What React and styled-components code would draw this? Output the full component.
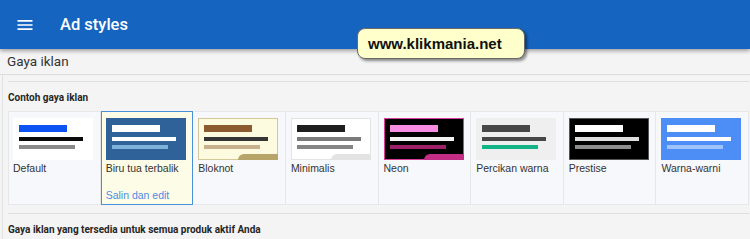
import React from 'react';
import styled, { createGlobalStyle } from 'styled-components';

const GlobalStyle = createGlobalStyle`
  html, body {
    margin: 0;
    padding: 0;
    background: #f4f4f4;
    overflow: hidden;
  }
  * {
    box-sizing: border-box;
  }
`

const Page = styled.div`
  position: relative;
  width: 750px;
  height: 239px;
  overflow: hidden;
  font-family: Roboto, "Liberation Sans", Arial, sans-serif;
`

const Header = styled.header`
  position: relative;
  z-index: 2;
  height: 49px;
  background: #1565c0;
  box-shadow: 0 2px 4px rgba(0, 0, 0, 0.35);
  display: flex;
  align-items: center;
  padding-left: 15px;
`

const MenuButton = styled.span`
  display: flex;
  width: 20px;
  height: 20px;
  margin-right: 25px;
`

const AppTitle = styled.h1`
  margin: 0;
  color: #ffffff;
  font-size: 16.5px;
  font-weight: 500;
`

const TitleBar = styled.div`
  height: 26px;
  padding: 4px 0 0 7px;
  border-bottom: 1px solid #dcdcdc;
  color: #333333;
  font-size: 13.5px;
  line-height: 17px;
`

const Content = styled.div`
  margin-left: 2px;
  border-left: 1px solid #e2e2e2;
  padding: 6px 1px 0 5px;
  height: 200px;
`

const Card = styled.section`
  border-top: 1px solid #dedede;
  border-bottom: 1px solid #dedede;
  padding: 9px 0 8px;
`

const SectionHeading = styled.h2`
  margin: 0;
  font-size: 10px;
  line-height: 13px;
  font-weight: 700;
  color: #262626;
`

const BottomHeading = styled(SectionHeading)`
  margin-top: 9px;
`

const TileRow = styled.div`
  margin-top: 7px;
  display: grid;
  grid-template-columns: repeat(8, 1fr);
  height: 94px;
`

const Tile = styled.div`
  background: ${p => (p.$selected ? '#fdfde7' : '#f7f8fc')};
  border: 1px solid ${p => (p.$selected ? '#4a8fdb' : '#e6e7ea')};
  border-left-color: ${p => (p.$selected ? '#4a8fdb' : p.$first ? '#e6e7ea' : 'transparent')};
  padding: 6px 0 0 4px;
  font-family: "Liberation Sans", Arial, sans-serif;
`

const Preview = styled.div`
  position: relative;
  width: 80px;
  height: 42px;
  padding: 7px 0 0 6px;
  background: ${p => p.$bg};
  box-shadow: ${p => (p.$border ? `inset 0 0 0 1px ${p.$border}` : 'none')};
  overflow: hidden;

  &::after {
    content: '';
    display: ${p => (p.$tab ? 'block' : 'none')};
    position: absolute;
    right: 0;
    bottom: 0;
    width: 40px;
    height: 6px;
    border-top-left-radius: 7px;
    background: ${p => p.$tab};
  }
`

const Bar = styled.div`
  width: ${p => p.$w}px;
  height: ${p => p.$h}px;
  margin-top: ${p => p.$gap}px;
  background: ${p => p.$color};
`

const TileLabel = styled.div`
  margin-top: 1px;
  font-size: 10.5px;
  line-height: 14px;
  color: #333333;
  white-space: nowrap;
`

const EditLink = styled.a`
  display: block;
  margin-top: 13px;
  font-size: 10.5px;
  line-height: 14px;
  color: #4f8ae9;
  text-decoration: none;
`

const Watermark = styled.div`
  position: absolute;
  z-index: 3;
  left: 357px;
  top: 28px;
  width: 168px;
  height: 31px;
  padding-left: 10px;
  display: flex;
  align-items: center;
  background: #ffffcc;
  border: 1px solid #6a6a6a;
  border-radius: 8px;
  box-shadow: 2px 2px 3px rgba(0, 0, 0, 0.45);
  font-family: "Liberation Sans", Arial, sans-serif;
  font-weight: 700;
  font-size: 15px;
  color: #111111;
`

const MenuIcon = () => (
  <svg width="20" height="20" viewBox="0 0 24 24" fill="#ffffff">
    <path d="M3 18h18v-2H3v2zm0-5h18v-2H3v2zm0-7v2h18V6H3z" />
  </svg>
)

const styles = [
  { name: 'Default', bg: '#ffffff', bars: ['#0d52f2', '#0a0a0a', '#8a8a8a'] },
  { name: 'Biru tua terbalik', bg: '#2f6299', bars: ['#ffffff', '#ffffff', '#7fb2d8'], selected: true },
  { name: 'Bloknot', bg: '#fcfadf', border: '#d3c898', tab: '#b7a468', bars: ['#8b5a2e', '#353535', '#c9b18d'] },
  { name: 'Minimalis', bg: '#ffffff', border: '#e4e4e4', tab: '#e3e3e3', bars: ['#1e1e1e', '#7a7a7a', '#858585'] },
  { name: 'Neon', bg: '#000000', border: '#d63c98', tab: '#c42d86', bars: ['#f68de2', '#f2f2f2', '#9c1f68'] },
  { name: 'Percikan warna', bg: '#efefef', bars: ['#474747', '#474747', '#14b489'] },
  { name: 'Prestise', bg: '#000000', border: '#555555', bars: ['#ffffff', '#dedede', '#8c8c8c'] },
  { name: 'Warna-warni', bg: '#4d8ef6', bars: ['#ffffff', '#ffffff', '#9fc3fb'] },
]

const barShapes = [
  { w: 48, h: 7, gap: 0 },
  { w: 64, h: 4, gap: 5 },
  { w: 56, h: 4, gap: 4 },
]

const App = () => (
  <Page>
    <GlobalStyle />
    <Header>
      <MenuButton><MenuIcon /></MenuButton>
      <AppTitle>Ad styles</AppTitle>
    </Header>
    <TitleBar>Gaya iklan</TitleBar>
    <Content>
      <Card>
        <SectionHeading>Contoh gaya iklan</SectionHeading>
        <TileRow>
          {styles.map((s, i) => (
            <Tile key={s.name} $selected={s.selected} $first={i === 0}>
              <Preview $bg={s.bg} $border={s.border} $tab={s.tab}>
                {barShapes.map((b, j) => (
                  <Bar key={j} $w={b.w} $h={b.h} $gap={b.gap} $color={s.bars[j]} />
                ))}
              </Preview>
              <TileLabel>{s.name}</TileLabel>
              {s.selected && <EditLink href="#">Salin dan edit</EditLink>}
            </Tile>
          ))}
        </TileRow>
      </Card>
      <BottomHeading>Gaya iklan yang tersedia untuk semua produk aktif Anda</BottomHeading>
    </Content>
    <Watermark>www.klikmania.net</Watermark>
  </Page>
)

export default App;
